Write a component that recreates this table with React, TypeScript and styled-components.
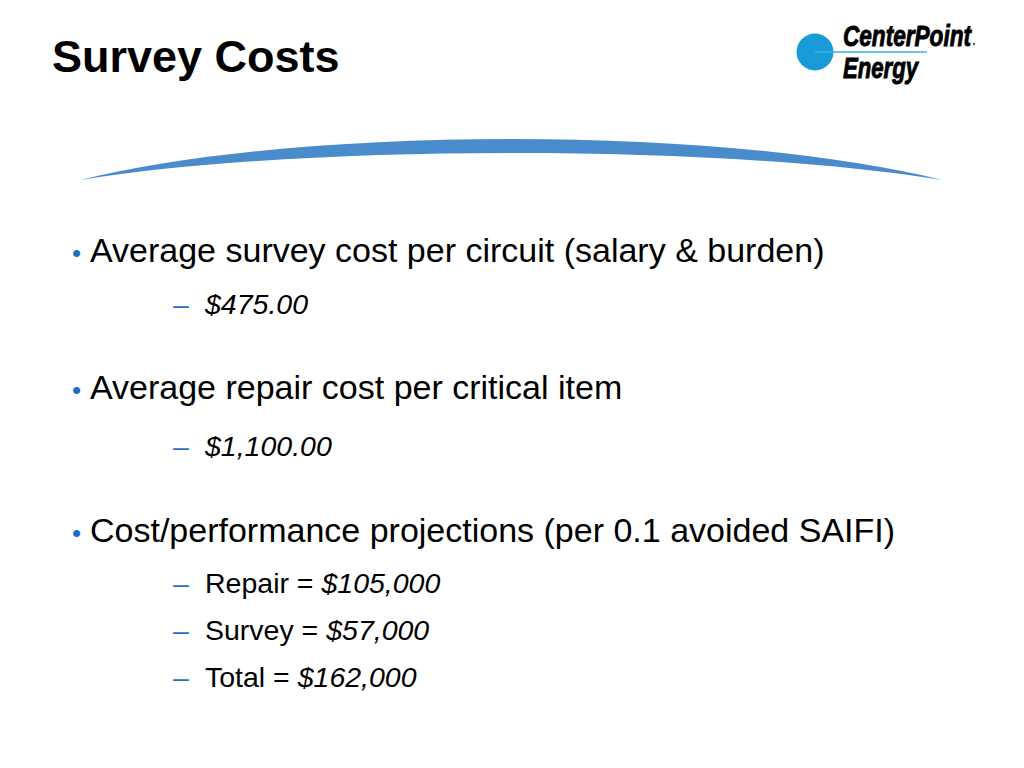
import React, { FC } from "react";
import styled, { createGlobalStyle } from "styled-components";

const GlobalStyle = createGlobalStyle`
  html, body {
    margin: 0;
    padding: 0;
    background: #ffffff;
  }
  body {
    font-family: "Liberation Sans", Arial, sans-serif;
    color: #000000;
  }
`;

const Slide = styled.div`
  width: 1024px;
  height: 768px;
  background: #ffffff;
  overflow: hidden;
`;

const Header = styled.div`
  display: flex;
  justify-content: space-between;
  align-items: flex-start;
  height: 130px;
  padding: 0 34px 0 52px;
  box-sizing: border-box;
`;

const Title = styled.h1`
  margin: 32px 0 0 0;
  font-family: "Liberation Sans", Arial, sans-serif;
  font-size: 45px;
  line-height: 50px;
  font-weight: bold;
  color: #000000;
`;

const LogoSvg = styled.svg`
  display: block;
  margin-top: 10px;
`;

const Arc = styled.svg`
  display: block;
`;

const Content = styled.div`
  padding-left: 70px;
  margin-top: 40px;
`;

const BulletRow = styled.div<{ top: number }>`
  display: flex;
  align-items: baseline;
  margin-top: ${(p) => p.top}px;
  font-size: 34px;
  line-height: 40px;
  white-space: nowrap;
`;

const Dot = styled.span`
  width: 18px;
  padding-left: 2px;
  font-size: 26px;
  color: #1b6ec2;
`;

const SubRow = styled.div<{ top: number }>`
  display: flex;
  align-items: baseline;
  margin-top: ${(p) => p.top}px;
  padding-left: 103px;
  font-size: 28.5px;
  line-height: 40px;
  white-space: nowrap;
`;

const Dash = styled.span`
  width: 32px;
  color: #2a6ebd;
`;

const Amount = styled.em`
  font-style: italic;
`;

// logo box starts at x 780, y 10 on the slide
const Logo: FC = () => (
  <LogoSvg width="210" height="82" viewBox="0 0 210 82">
    <circle cx="35" cy="42" r="18.5" fill="#1a9ad6" />
    <line x1="35" y1="42" x2="147" y2="42" stroke="#3ab0e6" strokeWidth="1.5" />
    <text
      x="63"
      y="36"
      fontFamily="'Liberation Sans', Arial, sans-serif"
      fontWeight="bold"
      fontStyle="italic"
      fontSize="29"
      textLength="128"
      lengthAdjust="spacingAndGlyphs"
      stroke="#000"
      strokeWidth="0.9"
      fill="#000"
    >
      CenterPoint
    </text>
    <circle cx="194" cy="34" r="0.9" fill="#000" />
    <text
      x="63"
      y="68"
      fontFamily="'Liberation Sans', Arial, sans-serif"
      fontWeight="bold"
      fontStyle="italic"
      fontSize="29"
      textLength="75"
      lengthAdjust="spacingAndGlyphs"
      stroke="#000"
      strokeWidth="0.9"
      fill="#000"
    >
      Energy
    </text>
  </LogoSvg>
);

const App: FC = () => {
  return (
    <>
      <GlobalStyle />
      <Slide>
        <Header>
          <Title>Survey Costs</Title>
          <Logo />
        </Header>
        <Arc width="1024" height="60" viewBox="0 0 1024 60">
          <path
            d="M80,50 C300,-4.7 722,-4.7 942,50 C722,14 300,14 80,50 Z"
            fill="#4a8ccb"
          />
        </Arc>
        <Content>
          <BulletRow top={0}>
            <Dot>•</Dot>
            <span>Average survey cost per circuit (salary &amp; burden)</span>
          </BulletRow>
          <SubRow top={11}>
            <Dash>–</Dash>
            <Amount>$475.00</Amount>
          </SubRow>
          <BulletRow top={43}>
            <Dot>•</Dot>
            <span>Average repair cost per critical item</span>
          </BulletRow>
          <SubRow top={16}>
            <Dash>–</Dash>
            <Amount>$1,100.00</Amount>
          </SubRow>
          <BulletRow top={44}>
            <Dot>•</Dot>
            <span>Cost/performance projections (per 0.1 avoided SAIFI)</span>
          </BulletRow>
          <SubRow top={10}>
            <Dash>–</Dash>
            <span>
              Repair = <Amount>$105,000</Amount>
            </span>
          </SubRow>
          <SubRow top={7}>
            <Dash>–</Dash>
            <span>
              Survey = <Amount>$57,000</Amount>
            </span>
          </SubRow>
          <SubRow top={7}>
            <Dash>–</Dash>
            <span>
              Total = <Amount>$162,000</Amount>
            </span>
          </SubRow>
        </Content>
      </Slide>
    </>
  );
};

export default App;
